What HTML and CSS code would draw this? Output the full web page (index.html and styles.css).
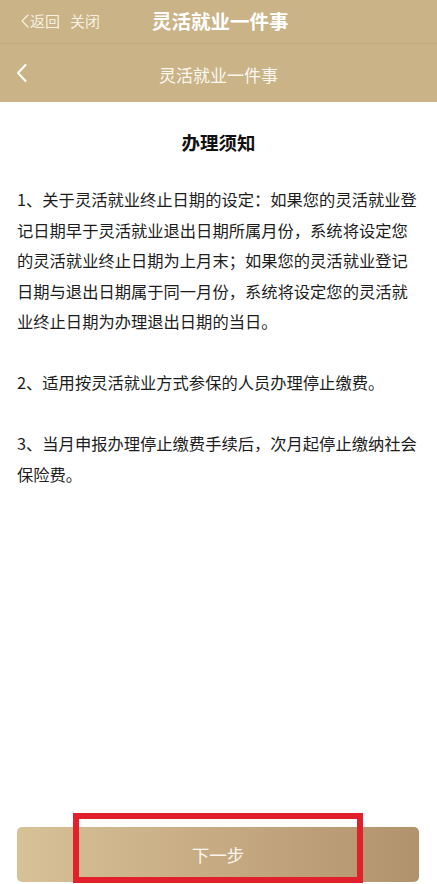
FILE: index.html
```html
<!DOCTYPE html>
<html lang="zh-CN">
<head>
<meta charset="utf-8">
<meta name="viewport" content="width=device-width, initial-scale=1">
<title>灵活就业一件事</title>
<link rel="stylesheet" href="styles.css">
</head>
<body>
<div class="page">
  <header class="topbar">
    <div class="top-left">
      <span class="back-link">
        <svg class="chev-small" viewBox="0 0 8 14" width="8" height="14"><polyline points="7,1 1,7 7,13" fill="none" stroke="currentColor" stroke-width="1.3" stroke-linejoin="round" stroke-linecap="round"/></svg>
        <span>返回</span>
      </span>
      <span class="close-link">关闭</span>
    </div>
    <div class="top-title">灵活就业一件事</div>
  </header>
  <nav class="navbar">
    <svg class="chev-nav" viewBox="0 0 11 20" width="11" height="20"><polyline points="9.5,2 2,10 9.5,18" fill="none" stroke="currentColor" stroke-width="2" stroke-linejoin="round" stroke-linecap="round"/></svg>
    <div class="nav-title">灵活就业一件事</div>
  </nav>
  <main class="content">
    <h1 class="notice-title">办理须知</h1>
    <div class="notice-body">
      <p>1、关于灵活就业终止日期的设定：如果您的灵活就业登记日期早于灵活就业退出日期所属月份，系统将设定您的灵活就业终止日期为上月末；如果您的灵活就业登记日期与退出日期属于同一月份，系统将设定您的灵活就业终止日期为办理退出日期的当日。</p>
      <p>2、适用按灵活就业方式参保的人员办理停止缴费。</p>
      <p>3、当月申报办理停止缴费手续后，次月起停止缴纳社会保险费。</p>
    </div>
  </main>
  <footer class="footer">
    <button class="next-btn" type="button">下一步</button>
  </footer>
  <div class="highlight-box"></div>
</div>
</body>
</html>
```
FILE: styles.css
```css
* { box-sizing: border-box; }
html, body { margin: 0; padding: 0; }
body {
  font-family: "Noto Sans CJK SC", "Noto Sans", "Liberation Sans", sans-serif;
  background: #ffffff;
  color: #1c1c1c;
}
.page {
  position: relative;
  display: flex;
  flex-direction: column;
  height: 100vh;
  overflow: hidden;
}
.topbar {
  position: relative;
  height: 44px;
  background: #cab386;
  border-bottom: 1px solid #c0a87c;
  display: flex;
  align-items: center;
  flex-shrink: 0;
}
.top-left {
  display: flex;
  align-items: center;
  gap: 10px;
  padding-left: 21px;
  color: #f6f0e3;
  font-size: 15px;
  line-height: 20px;
  margin-top: -2px;
}
.back-link { display: flex; align-items: center; gap: 1px; }
.chev-small { display: block; }
.top-title {
  margin-left: 52px;
  color: #ffffff;
  font-size: 19.5px;
  font-weight: 700;
  line-height: 26px;
  margin-top: -2px;
}
.navbar {
  position: relative;
  height: 58px;
  background: #cab386;
  display: flex;
  align-items: center;
  justify-content: center;
  flex-shrink: 0;
  color: #ffffff;
}
.chev-nav {
  position: absolute;
  left: 16px;
  top: 19px;
  display: block;
}
.nav-title {
  font-size: 17px;
  line-height: 24px;
  margin-top: 4px;
  color: #fbf8f2;
}
.content {
  flex: 1;
  padding: 0 17px;
}
.notice-title {
  margin: 25px 0 0;
  text-align: center;
  font-size: 18.5px;
  font-weight: 700;
  line-height: 30px;
  color: #111111;
}
.notice-body {
  margin-top: 27px;
  font-size: 16.3px;
  line-height: 30.5px;
}
.notice-body p {
  margin: 0 0 30.5px;
}
.footer {
  flex-shrink: 0;
  padding: 0 18px 2px 17px;
}
.next-btn {
  display: block;
  width: 100%;
  height: 55px;
  border: none;
  border-radius: 5px;
  background: linear-gradient(90deg, #d7c197 0%, #c8ad84 45%, #b1926e 100%);
  color: #fbf6ee;
  font-family: inherit;
  font-size: 17.5px;
  line-height: 24px;
  padding: 0;
}
.highlight-box {
  position: absolute;
  left: 73px;
  top: 813px;
  width: 290px;
  height: 70px;
  border: 6px solid #e2202c;
  pointer-events: none;
}
```
